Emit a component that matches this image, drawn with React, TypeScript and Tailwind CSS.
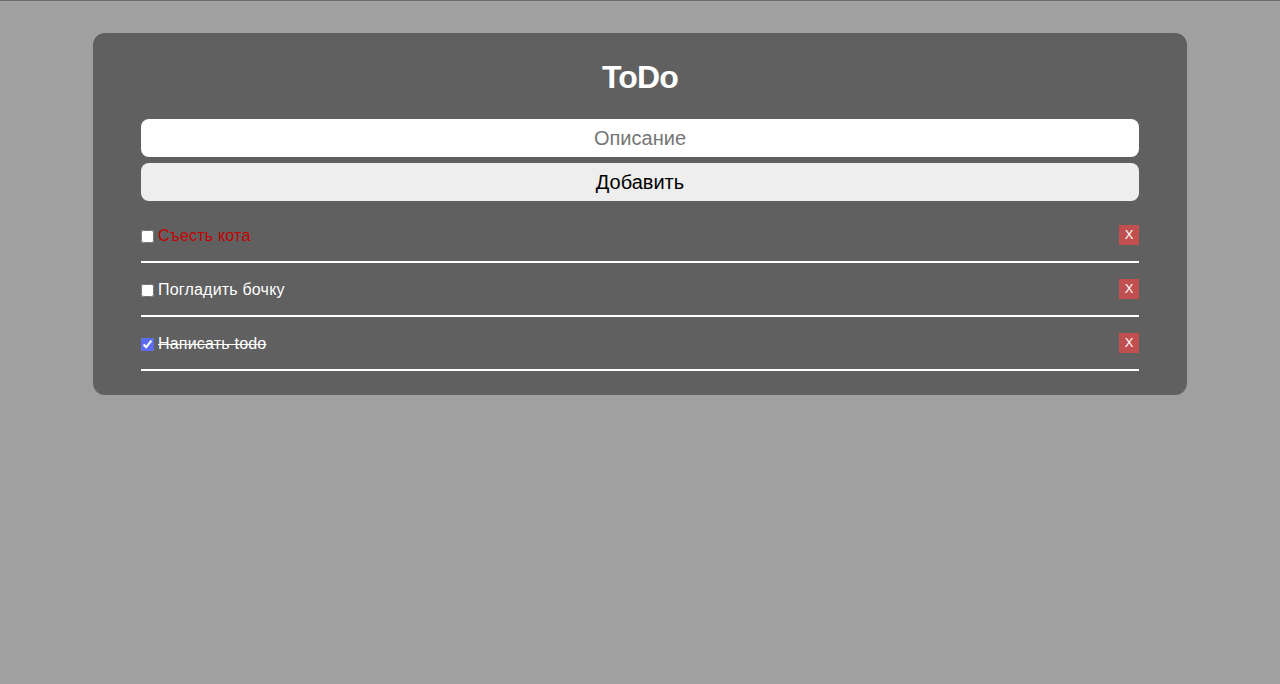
import React from "react";

const items = [
  { text: "Съесть кота", done: false, red: true },
  { text: "Погладить бочку", done: false, red: false },
  { text: "Написать todo", done: true, red: false },
];

export default function App() {
  return (
    <div
      className="min-h-[684px] bg-[#a0a0a0] border-t border-[#6b6b6b] pt-[32px]"
      style={{ fontFamily: '"Liberation Sans", Arial, sans-serif' }}
    >
      <div className="mx-auto w-[1094px] bg-[#606060] rounded-[12px] px-[48px] pt-[22px] pb-[24px]">
        <h1 className="text-center text-white font-bold text-[32px] leading-[44px] tracking-[-0.8px]">
          ToDo
        </h1>
        <div className="mt-[20px] flex flex-col gap-[6px]">
          <input
            placeholder="Описание"
            className="h-[38px] w-full rounded-[8px] bg-white text-center text-[20px] text-black placeholder:text-[#757575] outline-none"
          />
          <button className="h-[38px] w-full rounded-[8px] bg-[#eeeeee] text-center text-[20px] text-black">
            Добавить
          </button>
        </div>
        <ul className="mt-[8px]">
          {items.map((it) => (
            <li
              key={it.text}
              className="flex items-center justify-between py-[15px] border-b-2 border-white"
            >
              <label className="flex items-center gap-[4px] pt-[2px] text-[16px] leading-[20px]">
                <input
                  type="checkbox"
                  defaultChecked={it.done}
                  className="w-[13px] h-[13px] m-0 accent-[#5b6cf2]"
                />
                <span
                  className={
                    it.red
                      ? "text-[#c40000] tracking-[0.2px]"
                      : it.done
                      ? "text-white line-through tracking-[0.2px]"
                      : "text-white tracking-[0.2px]"
                  }
                >
                  {it.text}
                </span>
              </label>
              <button className="w-[20px] h-[20px] bg-[#c0504f] text-white text-[13px] leading-[20px] flex items-center justify-center">
                X
              </button>
            </li>
          ))}
        </ul>
      </div>
    </div>
  );
}
